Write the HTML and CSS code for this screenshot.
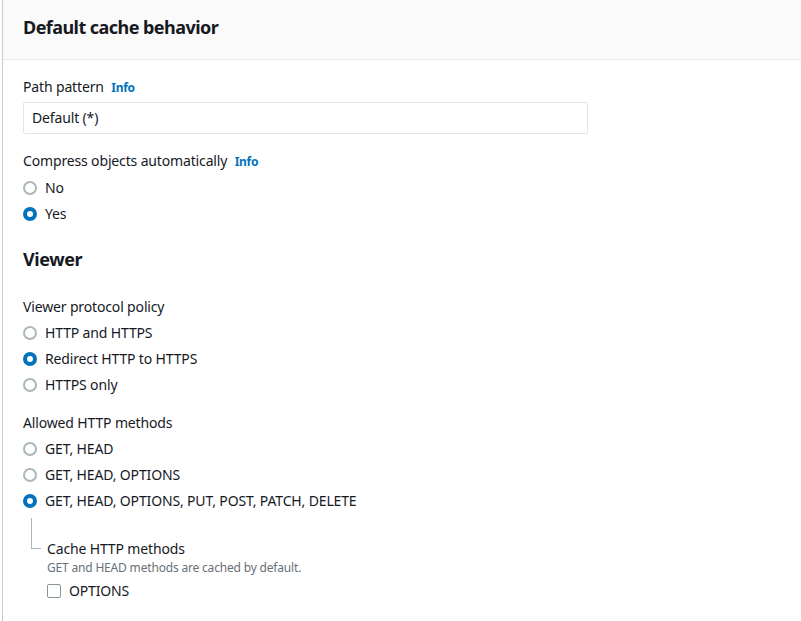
FILE: index.html
```html
<!DOCTYPE html>
<html>
<head>
<meta charset="utf-8">
<link rel="stylesheet" href="styles.css">
</head>
<body>
<div class="panel">
  <div class="panel-header"><h2 class="title">Default cache behavior</h2></div>
  <div class="panel-body">
    <div class="field">
      <div class="label">Path pattern <span class="info">Info</span></div>
      <div class="input">Default (*)</div>
    </div>
    <div class="field">
      <div class="label">Compress objects automatically <span class="info">Info</span></div>
      <div class="radios">
        <div class="radio"><span class="dot"></span>No</div>
        <div class="radio"><span class="dot on"></span>Yes</div>
      </div>
    </div>
    <h3 class="section">Viewer</h3>
    <div class="field">
      <div class="label">Viewer protocol policy</div>
      <div class="radios">
        <div class="radio"><span class="dot"></span>HTTP and HTTPS</div>
        <div class="radio"><span class="dot on"></span>Redirect HTTP to HTTPS</div>
        <div class="radio"><span class="dot"></span>HTTPS only</div>
      </div>
    </div>
    <div class="field">
      <div class="label">Allowed HTTP methods</div>
      <div class="radios">
        <div class="radio"><span class="dot"></span>GET, HEAD</div>
        <div class="radio"><span class="dot"></span>GET, HEAD, OPTIONS</div>
        <div class="radio"><span class="dot on"></span>GET, HEAD, OPTIONS, PUT, POST, PATCH, DELETE</div>
      </div>
      <div class="nested">
        <div class="connector"></div>
        <div class="nested-body">
          <div class="label">Cache HTTP methods</div>
          <div class="desc">GET and HEAD methods are cached by default.</div>
          <div class="check"><span class="box"></span>OPTIONS</div>
        </div>
      </div>
    </div>
  </div>
</div>
</body>
</html>
```
FILE: styles.css
```css
* { box-sizing: border-box; }
html, body { margin: 0; padding: 0; background: #fff; }
body {
  font-family: "Noto Sans", "Open Sans", sans-serif;
  font-size: 14px;
  line-height: 22px;
  letter-spacing: -0.15px;
  color: #16191f;
  padding-left: 2px;
}
.panel {
  border-left: 1px solid #c8cccc;
  min-height: 621px;
}
.panel-header {
  background: #fafafa;
  border-bottom: 1px solid #eaeded;
  height: 60px;
  padding: 15px 20px 0;
}
.title {
  margin: 0;
  font-size: 18px;
  line-height: 24px;
  font-weight: 700;
  letter-spacing: -0.55px;
}
.panel-body {
  padding: 16px 20px 0;
}
.field { margin-bottom: 16px; }
.label { line-height: 22px; }
.info {
  color: #0073bb;
  font-size: 12px;
  font-weight: 700;
  margin-left: 4px;
  letter-spacing: -0.3px;
}
.input {
  margin-top: 3px;
  width: 565px;
  height: 32px;
  border: 1px solid #e2e5e5;
  border-radius: 2px;
  padding: 0 8px;
  line-height: 30px;
}
.radios {
  display: flex;
  flex-direction: column;
  gap: 4px;
  margin-top: 4px;
}
.radio, .check {
  display: flex;
  align-items: center;
  gap: 8px;
  line-height: 22px;
}
.dot {
  width: 14px;
  height: 14px;
  border-radius: 50%;
  border: 2px solid #aab7b8;
  flex: none;
}
.dot.on {
  border: 4px solid #0073bb;
}
.section {
  margin: 22px 0 25px;
  font-size: 18px;
  line-height: 24px;
  font-weight: 700;
  letter-spacing: -0.4px;
}
.nested {
  display: flex;
}
.connector {
  flex: none;
  width: 10px;
  height: 31px;
  margin: 6px 6px 0 8px;
  border-left: 1px solid #aab7b8;
  border-bottom: 1px solid #aab7b8;
}
.nested-body { padding-top: 26px; }
.desc {
  font-size: 12px;
  line-height: 16px;
  color: #687078;
  letter-spacing: -0.18px;
}
.check { margin-top: 4px; }
.box {
  width: 14px;
  height: 14px;
  border: 1px solid #879596;
  border-radius: 2px;
  flex: none;
}
```
